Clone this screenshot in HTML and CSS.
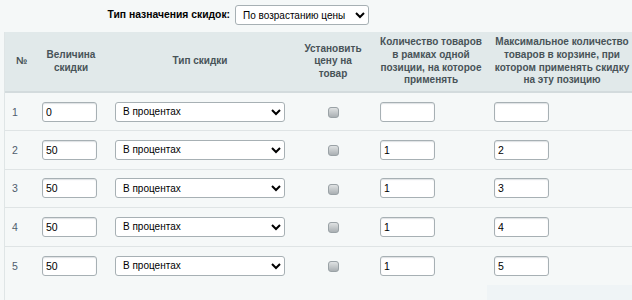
FILE: index.html
```html
<!DOCTYPE html>
<html lang="ru">
<head>
    <meta charset="UTF-8">
    <meta name="viewport" content="width=device-width, initial-scale=1.0">
    <title>Скидки</title>
    <link rel="stylesheet" href="styles.css">
</head>
<body>
    <div class="filter-bar">
        <label class="filter-label" for="discountMode">Тип назначения скидок:</label>
        <select id="discountMode" class="field-select top-select">
            <option>По возрастанию цены</option>
        </select>
    </div>

    <div class="grid-wrap">
        <table class="grid">
            <colgroup>
                <col class="c-num">
                <col class="c-value">
                <col class="c-type">
                <col class="c-flag">
                <col class="c-qty">
                <col class="c-max">
            </colgroup>
            <thead>
                <tr>
                    <th>№</th>
                    <th>Величина скидки</th>
                    <th>Тип скидки</th>
                    <th class="th-flag">Установить цену на товар</th>
                    <th class="th-qty">Количество товаров в рамках одной позиции, на которое применять</th>
                    <th class="th-max">Максимальное количество товаров в корзине, при котором применять скидку на эту позицию</th>
                </tr>
            </thead>
            <tbody>
                <tr>
                    <td class="cell-num">1</td>
                    <td class="cell-value"><input class="field-text" type="text" value="0"></td>
                    <td class="cell-type"><select class="field-select type-select"><option>В процентах</option></select></td>
                    <td class="cell-flag"><input class="flag" type="checkbox"></td>
                    <td class="cell-qty"><input class="field-text" type="text" value=""></td>
                    <td class="cell-max"><input class="field-text" type="text" value=""></td>
                </tr>
                <tr>
                    <td class="cell-num">2</td>
                    <td class="cell-value"><input class="field-text" type="text" value="50"></td>
                    <td class="cell-type"><select class="field-select type-select"><option>В процентах</option></select></td>
                    <td class="cell-flag"><input class="flag" type="checkbox"></td>
                    <td class="cell-qty"><input class="field-text" type="text" value="1"></td>
                    <td class="cell-max"><input class="field-text" type="text" value="2"></td>
                </tr>
                <tr>
                    <td class="cell-num">3</td>
                    <td class="cell-value"><input class="field-text" type="text" value="50"></td>
                    <td class="cell-type"><select class="field-select type-select"><option>В процентах</option></select></td>
                    <td class="cell-flag"><input class="flag" type="checkbox"></td>
                    <td class="cell-qty"><input class="field-text" type="text" value="1"></td>
                    <td class="cell-max"><input class="field-text" type="text" value="3"></td>
                </tr>
                <tr>
                    <td class="cell-num">4</td>
                    <td class="cell-value"><input class="field-text" type="text" value="50"></td>
                    <td class="cell-type"><select class="field-select type-select"><option>В процентах</option></select></td>
                    <td class="cell-flag"><input class="flag" type="checkbox"></td>
                    <td class="cell-qty"><input class="field-text" type="text" value="1"></td>
                    <td class="cell-max"><input class="field-text" type="text" value="4"></td>
                </tr>
                <tr>
                    <td class="cell-num">5</td>
                    <td class="cell-value"><input class="field-text" type="text" value="50"></td>
                    <td class="cell-type"><select class="field-select type-select"><option>В процентах</option></select></td>
                    <td class="cell-flag"><input class="flag" type="checkbox"></td>
                    <td class="cell-qty"><input class="field-text" type="text" value="1"></td>
                    <td class="cell-max"><input class="field-text" type="text" value="5"></td>
                </tr>
            </tbody>
        </table>
        <div class="grid-foot"></div>
    </div>
</body>
</html>
```

FILE: styles.css
```css
* {
    margin: 0;
    padding: 0;
    box-sizing: border-box;
    font-family: "Liberation Sans", Arial, sans-serif;
}

body {
    background-color: #f5f8f8;
    color: #000;
    width: 632px;
    overflow: hidden;
}

.filter-bar {
    display: flex;
    align-items: flex-start;
    height: 32px;
    padding-top: 5px;
}

.filter-label {
    width: 230px;
    text-align: right;
    font-size: 10.35px;
    font-weight: bold;
    color: #000;
    line-height: 20px;
    margin-right: 5px;
}

.field-select {
    height: 20px;
    border: 1px solid #a7b0b4;
    border-radius: 3px;
    background-color: #fff;
    font-size: 10px;
    color: #000;
    padding: 0 3px;
}

.top-select {
    width: 134px;
}

.type-select {
    width: 170px;
}

.grid-wrap {
    margin-left: 4px;
    border-left: 1px solid #dfe5e6;
}

.grid {
    border-collapse: collapse;
    table-layout: fixed;
    width: 627px;
}

.c-num { width: 33px; }
.c-value { width: 66px; }
.c-type { width: 192px; }
.c-flag { width: 74px; }
.c-qty { width: 122px; }
.c-max { width: 140px; }

.grid thead th {
    background-color: #e1e9ea;
    border-bottom: 2px solid #d3dbdd;
    height: 60px;
    padding: 0 2px;
    font-size: 10px;
    font-weight: bold;
    line-height: 12.6px;
    color: #485358;
    text-align: center;
    vertical-align: middle;
}

.grid thead .th-flag {
    padding: 0 8px;
}

.grid thead .th-qty {
    padding: 0 10px;
}

.grid thead .th-max {
    padding: 0 1px;
}

.grid tbody td {
    height: 38.5px;
    border-bottom: 1px solid #dfe4e5;
    vertical-align: middle;
    font-size: 10.5px;
}

.grid tbody tr:last-child td {
    border-bottom: none;
}

.cell-num {
    padding-left: 7px;
    color: #4f5d6d;
}

.cell-value {
    padding-left: 4px;
}

.cell-type {
    padding-left: 11px;
}

.cell-flag {
    text-align: center;
}

.cell-qty {
    padding-left: 10px;
}

.cell-max {
    padding-left: 2px;
}

.field-text {
    width: 55px;
    height: 20px;
    border: 1px solid #a7b0b4;
    border-radius: 3px;
    background-color: #fff;
    padding: 0 3px;
    font-size: 10.5px;
    color: #000;
    box-shadow: inset 0 1px 1px rgba(160, 170, 175, 0.35);
}

.flag {
    appearance: none;
    -webkit-appearance: none;
    width: 11px;
    height: 11px;
    border: 1px solid #9aa2a6;
    border-radius: 3px;
    background: linear-gradient(#dfe2e3, #aab0b3);
    vertical-align: middle;
}

.grid-foot {
    height: 16px;
    margin-left: 482px;
    background-color: #eff4f6;
}
```
